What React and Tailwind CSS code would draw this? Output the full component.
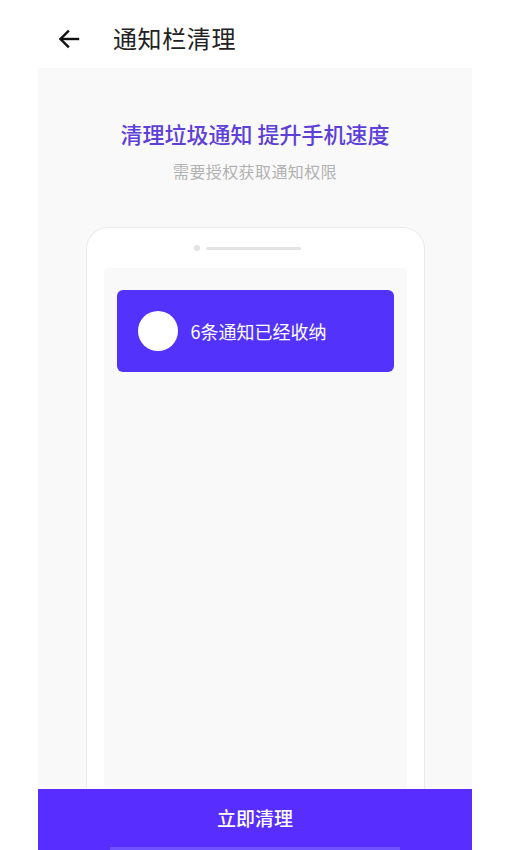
export default function App() {
  return (
    <div
      className="w-[510px] h-[850px] bg-white flex flex-col overflow-hidden"
      style={{ fontFamily: '"Noto Sans CJK SC", "Noto Sans", sans-serif' }}
    >
      <div className="h-[68px] shrink-0 flex items-center pt-[10px] pl-[58px]">
        <svg width="22" height="20" viewBox="0 0 22 20" fill="none" stroke="#111" strokeWidth="2.4" strokeLinecap="square">
          <path d="M20 10H3" />
          <path d="M10 2.5L2.5 10L10 17.5" />
        </svg>
        <span className="ml-[33px] text-[24px] leading-[30px] text-[#222] tracking-[0.6px] -mt-[2px]">通知栏清理</span>
      </div>

      <div className="mx-[38px] flex-1 min-h-0 bg-[#f9f9f9] flex flex-col items-center">
        <div className="mt-[50px] text-[22px] leading-[30px] text-[#5c40d8] font-medium">
          清理垃圾通知 提升手机速度
        </div>
        <div className="mt-[12px] text-[16px] leading-[22px] text-[#b2b2b2] tracking-[0.4px]">
          需要授权获取通知权限
        </div>

        <div className="mt-[45px] w-[339px] flex-1 bg-white rounded-t-[22px] border border-b-0 border-[#ebebeb] px-[17px] flex flex-col">
          <div className="h-[40px] shrink-0 flex items-center justify-center gap-[6px] pr-[16px]">
            <div className="w-[6px] h-[6px] rounded-full bg-[#e3e3e3]" />
            <div className="w-[95px] h-[3px] rounded-full bg-[#e3e3e3]" />
          </div>
          <div className="flex-1 bg-[#f9f9f9] rounded-t-[4px] px-[13px] pt-[22px]">
            <div className="h-[82px] bg-[#5333fb] rounded-[6px] flex items-center pl-[21px]">
              <div className="w-[40px] h-[40px] rounded-full bg-white" />
              <span className="ml-[13px] text-[18px] text-white">6条通知已经收纳</span>
            </div>
          </div>
        </div>
      </div>

      <div className="mx-[38px] h-[61px] shrink-0 bg-[#582dff] flex flex-col items-center">
        <div className="flex-1 flex items-center pt-[1px] text-[19px] font-medium text-white">
          立即清理
        </div>
        <div className="w-[290px] h-[3px] bg-[#7152ff]" />
      </div>
    </div>
  );
}
